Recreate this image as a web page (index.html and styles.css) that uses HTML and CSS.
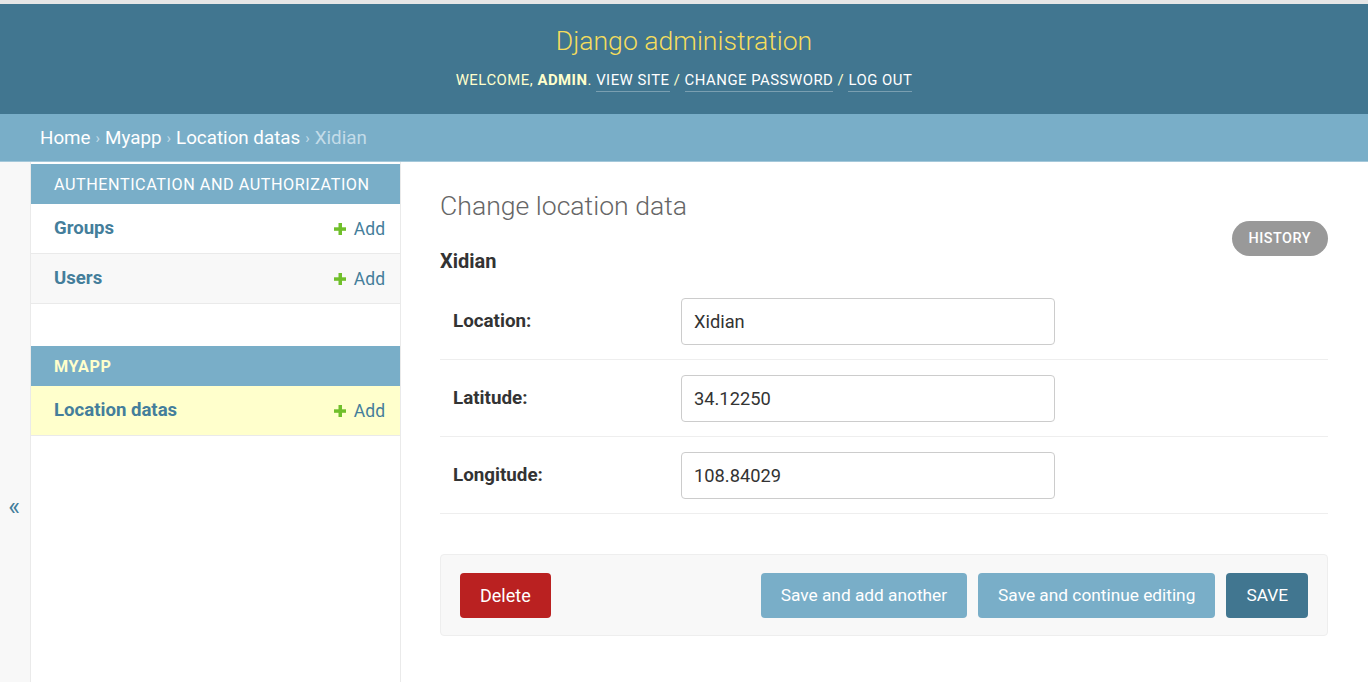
FILE: index.html
```html
<!DOCTYPE html>
<html lang="en">
<head>
<meta charset="utf-8">
<title>Change location data | Django site admin</title>
<link rel="stylesheet" href="styles.css">
</head>
<body>
<div class="topline"></div>
<header class="header">
  <h1 class="branding">Django administration</h1>
  <div class="user-tools">
    Welcome, <strong>admin</strong>. <a href="#">View site</a> / <a href="#">Change password</a> / <a href="#">Log out</a>
  </div>
</header>
<nav class="breadcrumbs">
  <a href="#">Home</a> <span class="sep">›</span> <a href="#">Myapp</a> <span class="sep">›</span> <a href="#">Location datas</a> <span class="sep">›</span> <span class="cur">Xidian</span>
</nav>
<div class="main">
  <div class="toggle"><span class="toggle-glyph">«</span></div>
  <aside class="sidebar">
    <div class="module">
      <div class="caption">Authentication and Authorization</div>
      <div class="row"><a class="model" href="#">Groups</a><a class="add" href="#"><svg class="plus" viewBox="0 0 12 12" width="12" height="12"><rect x="4.5" y="0" width="3.5" height="12" fill="#70bf2b"/><rect x="0" y="4.3" width="12" height="3.5" fill="#70bf2b"/></svg>Add</a></div>
      <div class="row alt"><a class="model" href="#">Users</a><a class="add" href="#"><svg class="plus" viewBox="0 0 12 12" width="12" height="12"><rect x="4.5" y="0" width="3.5" height="12" fill="#70bf2b"/><rect x="0" y="4.3" width="12" height="3.5" fill="#70bf2b"/></svg>Add</a></div>
    </div>
    <div class="module">
      <div class="caption current">Myapp</div>
      <div class="row current-model"><a class="model" href="#">Location datas</a><a class="add" href="#"><svg class="plus" viewBox="0 0 12 12" width="12" height="12"><rect x="4.5" y="0" width="3.5" height="12" fill="#70bf2b"/><rect x="0" y="4.3" width="12" height="3.5" fill="#70bf2b"/></svg>Add</a></div>
    </div>
  </aside>
  <main class="content">
    <div class="title-row">
      <h1 class="page-title">Change location data</h1>
    </div>
    <div class="sub-row">
      <h2 class="object-name">Xidian</h2>
      <a class="history" href="#">History</a>
    </div>
    <form class="form">
      <div class="form-row"><label class="label">Location:</label><input class="input" type="text" value="Xidian"></div>
      <div class="form-row"><label class="label">Latitude:</label><input class="input" type="text" value="34.12250"></div>
      <div class="form-row"><label class="label">Longitude:</label><input class="input" type="text" value="108.84029"></div>
      <div class="submit-row">
        <a class="btn delete" href="#">Delete</a>
        <div class="spacer"></div>
        <button type="button" class="btn light">Save and add another</button>
        <button type="button" class="btn light">Save and continue editing</button>
        <button type="button" class="btn save">SAVE</button>
      </div>
    </form>
  </main>
</div>
</body>
</html>
```
FILE: styles.css
```css
* { box-sizing: border-box; }
html, body { margin: 0; padding: 0; }
body {
  font-family: Roboto, "Liberation Sans", sans-serif;
  color: #333;
  background: #fff;
  width: 1368px;
  height: 682px;
  overflow: hidden;
}
a { text-decoration: none; }
.topline { height: 4px; background: #e6e6e6; }
.header {
  height: 110px;
  background: #417690;
  display: flex;
  flex-direction: column;
  align-items: center;
  padding-top: 22px;
}
.branding {
  margin: 0;
  font-weight: 300;
  font-size: 26.6px;
  line-height: 30px;
  color: #f5dd5d;
}
.user-tools {
  margin-top: 14px;
  font-size: 14.9px;
  line-height: 20px;
  letter-spacing: 0.5px;
  text-transform: uppercase;
  color: #ffc;
}
.user-tools strong { font-weight: 700; }
.user-tools a {
  color: #fff;
  border-bottom: 1px solid rgba(255,255,255,0.3);
  padding-bottom: 2px;
}
.breadcrumbs {
  height: 48px;
  background: #79aec8;
  border-bottom: 1px solid #a4c8da;
  padding: 0 40px;
  display: flex;
  align-items: center;
  gap: 5px;
  font-size: 18.8px;
  color: #c4dce8;
}
.breadcrumbs a { color: #fff; }
.breadcrumbs .sep { font-size: 15px; }
.main {
  display: flex;
  height: 520px;
}
.toggle {
  width: 31px;
  flex: 0 0 31px;
  background: #f8f8f8;
  border-right: 1px solid #eaeaea;
  display: flex;
  align-items: flex-start;
  justify-content: center;
  padding-top: 330px;
}
.toggle-glyph { color: #447e9b; font-size: 25px; line-height: 30px; margin-left: -2px; }
.sidebar {
  width: 370px;
  flex: 0 0 370px;
  border-right: 1px solid #eaeaea;
  padding-top: 2px;
}
.module { margin-bottom: 42px; }
.caption {
  height: 40px;
  background: #79aec8;
  color: #fff;
  font-size: 16.2px;
  letter-spacing: 0.55px;
  text-transform: uppercase;
  padding-left: 23px;
  display: flex;
  align-items: center;
}
.caption.current { color: #ffc; font-weight: 700; }
.row {
  height: 50px;
  border-bottom: 1px solid #eaeaea;
  display: flex;
  align-items: center;
  justify-content: space-between;
  padding: 0 15px 0 23px;
  background: #fff;
}
.row.alt { background: #f8f8f8; }
.row.current-model { background: #ffc; }
.model { color: #447e9b; font-weight: 700; font-size: 18.6px; margin-top: -1px; }
.add { color: #447e9b; font-size: 17.5px; display: flex; align-items: center; gap: 8px; }
.plus { display: block; }
.content {
  flex: 1;
  padding: 26px 40px 0 39px;
}
.page-title {
  margin: 0;
  font-size: 26.6px;
  font-weight: 300;
  color: #666;
  line-height: 36px;
}
.sub-row {
  display: flex;
  justify-content: space-between;
  align-items: flex-start;
  margin-top: -3px;
}
.object-name {
  margin: 23px 0 0;
  font-size: 20px;
  font-weight: 700;
  color: #333;
  line-height: 34px;
}
.history {
  height: 35px;
  padding: 0 17px;
  border-radius: 18px;
  background: #999;
  color: #fff;
  font-size: 14.4px;
  font-weight: 500;
  letter-spacing: 0.5px;
  text-transform: uppercase;
  display: flex;
  align-items: center;
}
.form { margin-top: 5px; }
.form-row {
  display: flex;
  align-items: center;
  padding: 0 0 0 13px;
  border-bottom: 1px solid #eee;
  height: 77px;
}
.label {
  width: 228px;
  font-size: 18.8px;
  font-weight: 700;
  color: #333;
}
.input {
  width: 374px;
  height: 47px;
  border: 1px solid #ccc;
  border-radius: 4px;
  padding: 0 12px;
  font-family: Roboto, "Liberation Sans", sans-serif;
  font-size: 18.3px;
  color: #333;
  background: #fff;
}
.submit-row {
  margin-top: 40px;
  height: 82px;
  background: #f8f8f8;
  border: 1px solid #eee;
  border-radius: 4px;
  display: flex;
  align-items: center;
  padding: 0 19px;
  gap: 11px;
}
.spacer { flex: 1; }
.btn {
  height: 45px;
  border: none;
  border-radius: 4px;
  padding: 0 20px;
  font-family: Roboto, "Liberation Sans", sans-serif;
  font-size: 17.3px;
  color: #fff;
  display: flex;
  align-items: center;
}
.btn.delete { background: #ba2121; font-size: 18px; padding: 0 20px; }
.light { background: #79aec8; }
.save { background: #417690; }
```
